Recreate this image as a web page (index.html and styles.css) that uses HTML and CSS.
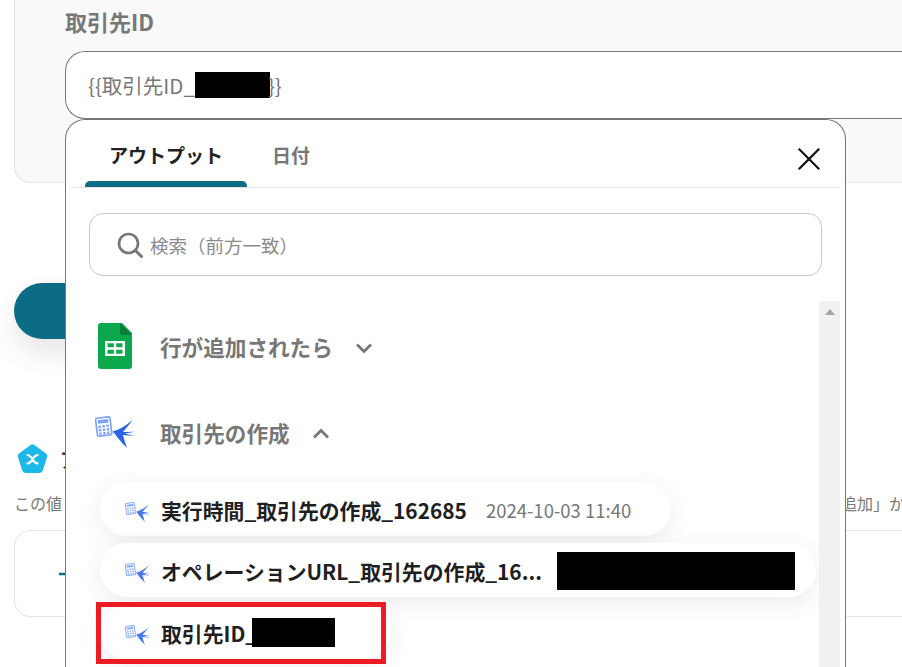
FILE: index.html
```html
<!DOCTYPE html>
<html lang="ja">
<head>
<meta charset="utf-8">
<title>取引先ID</title>
<link rel="stylesheet" href="styles.css">
</head>
<body>
<svg class="defs" width="0" height="0" aria-hidden="true">
  <defs>
    <symbol id="app" viewBox="0 0 40 32">
      <g transform="rotate(-7 9 11)">
        <rect x="1.500" y="1.500" width="14.500" height="18" rx="1.500" fill="#fff" stroke="#7aa0f8" stroke-width="1.600"/>
        <rect x="3.500" y="3.500" width="10.500" height="3.500" fill="#7aa0f8"/>
        <path d="M3.500 9h2.400v2.300H3.500zM7.500 9h2.400v2.300H7.500zM11.500 9h2.400v2.300h-2.400zM3.500 12.500h2.400v2.300H3.500zM7.500 12.500h2.400v2.300H7.500zM11.500 12.500h2.400v2.300h-2.400zM3.500 16h2.400v2.300H3.500zM7.500 16h2.400v2.300H7.500zM11.500 16h2.400v2.300h-2.400z" fill="#7aa0f8"/>
      </g>
      <path d="M17.500 15.500C24 14 32 9 38.500 3 34 9 31 12 28 16L40 15.800 30 17.500 39.500 20 28 19C29 23 30.500 28 32 32 27 27 22 21 20 18Z" fill="#2a62e8"/>
    </symbol>
  </defs>
</svg>

<main class="page">
  <section class="card">
    <h2 class="field-label">取引先ID</h2>
    <div class="field-input">{{取引先ID_<span class="redact redact-input"></span>}}</div>
  </section>

  <div class="primary-button"></div>

  <section class="outputs">
    <div class="outputs-title">
      <svg class="pentagon" viewBox="0 0 31 30" aria-hidden="true">
        <path d="M13.300 1.200a3.600 3.600 0 0 1 4.400 0l11 8a3.600 3.600 0 0 1 1.300 4l-4.200 13.400a3.600 3.600 0 0 1-3.400 2.400H8.600a3.600 3.600 0 0 1-3.400-2.400L1 13.200a3.600 3.600 0 0 1 1.300-4z" fill="#1cb8e8"/>
        <path d="M10.500 11c2 .2 3.200 1.500 5 3.800 1.800-2.300 3-3.600 5-3.800M10.500 19.500c2-.2 3.200-1.500 5-3.800 1.800 2.300 3 3.600 5 3.800" fill="none" stroke="#fff" stroke-width="2.200" stroke-linecap="round"/>
      </svg>
      <span>アウトプット</span>
    </div>
    <div class="outputs-help">
      <span>この値</span>
      <span class="help-end">追加」か</span>
    </div>
    <div class="outputs-box">
      <svg class="plus" viewBox="0 0 20 20" aria-hidden="true"><path d="M0 10h20M10 0v20" stroke="#0c6b85" stroke-width="2.400"/></svg>
    </div>
  </section>
</main>

<div class="popup">
  <div class="tabs">
    <div class="tab tab-active">アウトプット</div>
    <div class="tab">日付</div>
    <svg class="close" viewBox="0 0 22 22" aria-hidden="true">
      <path d="M1.500 1.500l19 19M20.500 1.500l-19 19" stroke="#111" stroke-width="2.200" stroke-linecap="square" fill="none"/>
    </svg>
  </div>

  <div class="search">
    <svg class="search-icon" viewBox="0 0 26 26" aria-hidden="true">
      <circle cx="11.500" cy="11.500" r="9.500" fill="none" stroke="#777" stroke-width="2.600"/>
      <path d="M18.500 18.500l6 6" stroke="#777" stroke-width="3" stroke-linecap="round"/>
    </svg>
    <span>検索（前方一致）</span>
  </div>

  <div class="list-wrap">
    <div class="list">
      <div class="group">
        <svg class="sheets" viewBox="0 0 34 46" aria-hidden="true">
          <path d="M3 0h21l10 10v33a3 3 0 0 1-3 3H3a3 3 0 0 1-3-3V3a3 3 0 0 1 3-3z" fill="#0ba94c"/>
          <path d="M22 0l12 12H24a2 2 0 0 1-2-2z" fill="#0a7d3a"/>
          <path d="M7 18h20v15H7zM9.500 20.300v4h6.300v-4zM18.200 20.300v4h6.300v-4zM9.500 26.700v4h6.300v-4zM18.200 26.700v4h6.300v-4z" fill="#fff" fill-rule="evenodd"/>
        </svg>
        <span class="group-name">行が追加されたら</span>
        <svg class="chev" viewBox="0 0 18 12" aria-hidden="true"><path d="M2 2.500l7 7 7-7" fill="none" stroke="#777" stroke-width="2.800"/></svg>
      </div>
      <div class="group group-second">
        <svg class="app-large" aria-hidden="true"><use href="#app"/></svg>
        <span class="group-name">取引先の作成</span>
        <svg class="chev" viewBox="0 0 18 12" aria-hidden="true"><path d="M2 9.500l7-7 7 7" fill="none" stroke="#777" stroke-width="2.800"/></svg>
      </div>
      <div class="items">
        <div class="item">
          <svg class="app-small" aria-hidden="true"><use href="#app"/></svg>
          <span class="item-name">実行時間_取引先の作成_162685</span>
          <span class="item-value">2024-10-03 11:40</span>
        </div>
        <div class="item">
          <svg class="app-small" aria-hidden="true"><use href="#app"/></svg>
          <span class="item-name">オペレーションURL_取引先の作成_16...</span>
          <span class="redact redact-url"></span>
        </div>
        <div class="item item-id">
          <svg class="app-small" aria-hidden="true"><use href="#app"/></svg>
          <span class="item-name">取引先ID_</span>
          <span class="redact redact-id"></span>
        </div>
      </div>
    </div>
    <div class="scrollbar"><span class="scroll-arrow"></span></div>
  </div>
</div>

<div class="highlight"></div>
</body>
</html>
```

FILE: styles.css
```css
* { box-sizing: border-box; }

html, body {
  margin: 0;
  height: 667px;
  overflow: hidden;
  background: #fff;
}

body {
  position: relative;
  font-family: "Noto Sans CJK JP", "Noto Sans", sans-serif;
  color: #777;
}

.defs { position: absolute; }

.page {
  width: 902px;
  padding-left: 14px;
}

.card {
  height: 183px;
  padding: 7px 0 0 50px;
  background: #f9f9fa;
  border: 1px solid #e4e4e8;
  border-width: 0 0 1px 1px;
  border-radius: 0 0 0 16px;
}

.field-label {
  margin: 0;
  font-size: 22px;
  line-height: 28px;
  font-weight: 700;
  color: #777;
}

.field-input {
  display: flex;
  align-items: center;
  height: 68px;
  margin-top: 16px;
  padding-left: 22px;
  font-size: 20.500px;
  color: #777;
  background: #fff;
  border: 1px solid #777;
  border-right: 0;
  border-radius: 20px 0 0 20px;
}

.redact {
  display: block;
  background: #000;
  flex: none;
}

.redact-input {
  width: 75px;
  height: 26px;
  margin-right: -2px;
}

.primary-button {
  width: 400px;
  height: 56px;
  margin-top: 100px;
  background: #0c6b85;
  border-radius: 28px;
  box-shadow: 0 14px 28px rgba(0, 0, 0, 0.1);
}

.outputs { margin-top: 105px; }

.outputs-title {
  display: flex;
  align-items: center;
  gap: 12px;
  margin-left: 3px;
  height: 30px;
  font-size: 20px;
  font-weight: 700;
  color: #333;
}

.pentagon {
  width: 31px;
  height: 30px;
}

.outputs-help {
  display: flex;
  justify-content: space-between;
  overflow: hidden;
  margin-top: 14px;
  font-size: 16px;
  line-height: 30px;
  color: #777;
}

.help-end {
  flex: none;
  margin-right: -3px;
}

.outputs-box {
  display: flex;
  align-items: center;
  height: 87px;
  margin-top: 12px;
  padding-left: 44px;
  border: 1px solid #e4e4e8;
  border-right: 0;
  border-radius: 16px 0 0 16px;
}

.plus {
  width: 20px;
  height: 20px;
}

/* Popup sits over the page */
.popup {
  position: absolute;
  left: 65px;
  top: 119px;
  width: 781px;
  height: 548px;
  background: #fff;
  border: 1px solid #777;
  border-bottom: 0;
  border-radius: 20px 20px 0 0;
  padding: 0 5px 0 4px;
}

.tabs {
  display: flex;
  height: 68px;
  padding-left: 15px;
  border-bottom: 1px solid #e4e4e8;
}

.tab {
  display: flex;
  align-items: center;
  justify-content: center;
  height: 67px;
  padding: 7px 0 6px;
  font-size: 19px;
  font-weight: 700;
  color: #777;
}

.tab:nth-child(2) { margin-left: 25px; }

.tab-active {
  position: relative;
  width: 162px;
  color: #222;
}

.tab-active::after {
  content: "";
  position: absolute;
  left: 0;
  right: 0;
  bottom: 0;
  height: 6px;
  background: #0c6b85;
  border-radius: 5px 5px 0 0;
}

.close {
  width: 22px;
  height: 22px;
  margin: 28px 20px 0 auto;
}

.search {
  display: flex;
  align-items: center;
  gap: 7px;
  height: 63px;
  margin: 25px 18px 0 19px;
  padding-left: 27px;
  font-size: 18.500px;
  color: #8a8a8a;
  border: 1px solid #c8c8c8;
  border-radius: 14px;
}

.search-icon {
  width: 26px;
  height: 26px;
}

.list-wrap {
  display: flex;
  justify-content: space-between;
  margin-top: 25px;
  height: 366px;
  overflow: hidden;
}

.list { flex: 1; }

.scrollbar {
  flex: none;
  width: 21px;
  height: 366px;
  background: #f1f1f1;
  padding-top: 8px;
  display: flex;
  justify-content: center;
  align-items: flex-start;
}

.scroll-arrow {
  width: 0;
  height: 0;
  border-left: 5px solid transparent;
  border-right: 5px solid transparent;
  border-bottom: 6px solid #a5a5a5;
}

.group {
  display: flex;
  align-items: center;
  height: 46px;
  margin-top: 22px;
  margin-left: 28px;
}

.group-second {
  margin-top: 40px;
  margin-left: 25px;
}

.sheets {
  width: 34px;
  height: 46px;
  margin-right: 28px;
}

.app-large {
  width: 40px;
  height: 32px;
  margin-right: 25px;
}

.group-name {
  font-size: 21.600px;
  font-weight: 700;
  color: #777;
}

.chev {
  width: 18px;
  height: 12px;
  margin-left: 22px;
  margin-top: 4px;
}

.items {
  display: flex;
  flex-direction: column;
  align-items: flex-start;
  gap: 7px;
  margin: 27px 0 0 30px;
}

.item {
  display: flex;
  align-items: center;
  height: 54px;
  padding: 1px 40px 0 25px;
  background: #fff;
  border-radius: 27px;
  box-shadow: 0 6px 24px rgba(0, 0, 0, 0.08);
}

.item-id {
  margin-top: 1px;
  padding-right: 56px;
}

.app-small {
  width: 25px;
  height: 20px;
  margin: 4px 11px 0 0;
  opacity: 0.85;
}

.item-name {
  font-size: 20.850px;
  font-weight: 700;
  color: #1f1f1f;
  white-space: nowrap;
}

.item-value {
  margin-left: 19px;
  font-size: 18.500px;
  color: #777;
  white-space: nowrap;
}

.redact-url {
  width: 238px;
  height: 38px;
  margin-left: 15px;
  margin-right: -19px;
}

.redact-id {
  width: 83px;
  height: 29px;
  margin-left: -5px;
}

.highlight {
  position: absolute;
  left: 96px;
  top: 602px;
  width: 290px;
  height: 62px;
  border: 5px solid #ed1c24;
}
```
